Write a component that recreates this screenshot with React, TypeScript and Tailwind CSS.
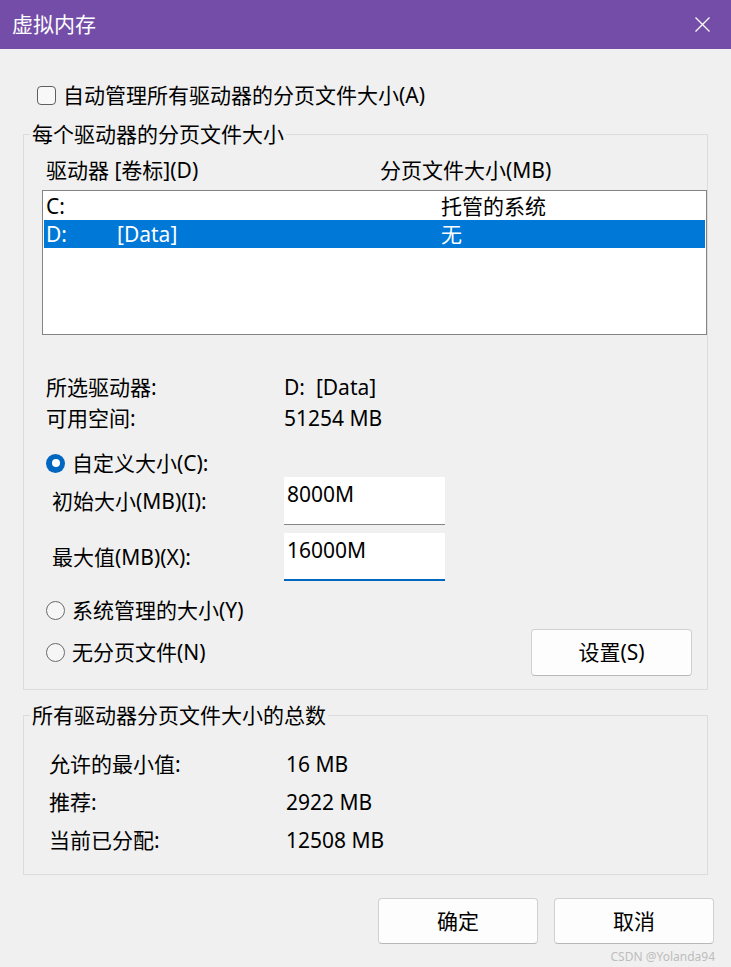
import React from 'react'

// ── 单选按钮 ─────────────────────────────────────────────
function Radio({ checked }: { checked?: boolean }) {
  if (checked) {
    return (
      <span className="flex h-[19px] w-[19px] shrink-0 items-center justify-center rounded-full bg-[#0067c0]">
        <span className="h-[8px] w-[8px] rounded-full bg-white" />
      </span>
    )
  }
  return <span className="h-[19px] w-[19px] shrink-0 rounded-full border border-[#6b6b6b] bg-[#f6f6f6]" />
}

function Button({ children, className = '' }: { children: React.ReactNode; className?: string }) {
  return (
    <button
      className={`flex items-center justify-center rounded-[4px] border border-[#d0d0d0] border-b-[#b8b8b8] bg-[#fdfdfd] ${className}`}
    >
      {children}
    </button>
  )
}

export default function App() {
  return (
    <div className="relative flex h-[967px] w-[731px] flex-col overflow-hidden bg-[#f0f0f0] font-['Noto_Sans','Noto_Sans_CJK_SC',sans-serif] text-[21px] leading-none text-black">
      {/* 标题栏 */}
      <div className="flex h-[49px] shrink-0 items-center justify-between bg-[#744da9] pl-[12px] pr-[21px] text-white">
        <span>虚拟内存</span>
        <svg width="15" height="15" viewBox="0 0 15 15" fill="none" stroke="white" strokeWidth="1.3">
          <path d="M0.5 0.5 L14.5 14.5 M14.5 0.5 L0.5 14.5" />
        </svg>
      </div>

      {/* 自动管理 */}
      <label className="mx-[23px] mt-[34px] flex h-[24px] items-center gap-[7px] pl-[14px]">
        <span className="h-[19px] w-[19px] shrink-0 rounded-[4px] border border-[#5f5f5f] bg-[#f8f8f8]" />
        <span>自动管理所有驱动器的分页文件大小(A)</span>
      </label>

      {/* 每个驱动器的分页文件大小 */}
      <fieldset className="mx-[23px] mt-[15px] border border-[#dcdcdc] pb-[13px]">
        <legend className="ml-[6px] px-[2px] leading-[24px]">每个驱动器的分页文件大小</legend>

        <div className="mt-[12px] grid h-[24px] grid-cols-[334px_1fr] items-center pl-[22px]">
          <span>驱动器 [卷标](D)</span>
          <span>分页文件大小(MB)</span>
        </div>

        <div className="ml-[18px] mt-[8px] h-[145px] border border-[#848484] bg-white p-px">
          <div className="grid h-[28px] grid-cols-[71px_324px_1fr] items-center pl-[2px]">
            <span>C:</span>
            <span />
            <span>托管的系统</span>
          </div>
          <div className="grid h-[28px] grid-cols-[71px_324px_1fr] items-center bg-[#0078d7] pl-[2px] text-white">
            <span>D:</span>
            <span>[Data]</span>
            <span>无</span>
          </div>
        </div>

        <div className="mt-[37px] grid h-[31px] grid-cols-[238px_1fr] items-center pl-[22px]">
          <span>所选驱动器:</span>
          <span>D:&nbsp;&nbsp;[Data]</span>
        </div>
        <div className="grid h-[31px] grid-cols-[238px_1fr] items-center pl-[22px]">
          <span>可用空间:</span>
          <span>51254 MB</span>
        </div>

        <div className="mt-[15px] flex h-[28px] items-center gap-[7px] pl-[22px]">
          <Radio checked />
          <span>自定义大小(C):</span>
        </div>

        <div className="flex items-center pl-[28px]">
          <span className="w-[232px]">初始大小(MB)(I):</span>
          <div className="h-[48px] w-[161px] border-b border-[#868686] bg-white pl-[3px] pt-[7px]">8000M</div>
        </div>
        <div className="mt-[8px] flex items-center pl-[28px]">
          <span className="w-[232px]">最大值(MB)(X):</span>
          <div className="h-[48px] w-[161px] border-b-2 border-[#0067c0] bg-white pl-[3px] pt-[7px]">16000M</div>
        </div>

        <div className="mt-[14px] flex h-[30px] items-center gap-[7px] pl-[22px]">
          <Radio />
          <span>系统管理的大小(Y)</span>
        </div>
        <div className="mt-[4px] flex h-[47px] items-center justify-between pl-[22px] pr-[15px]">
          <div className="flex items-center gap-[7px]">
            <Radio />
            <span>无分页文件(N)</span>
          </div>
          <Button className="h-[47px] w-[161px]">设置(S)</Button>
        </div>
      </fieldset>

      {/* 总数 */}
      <fieldset className="mx-[23px] mt-[13px] border border-[#dcdcdc] pb-[15px]">
        <legend className="ml-[6px] px-[2px] leading-[24px]">所有驱动器分页文件大小的总数</legend>
        <div className="mt-[18px]">
          {[
            ['允许的最小值:', '16 MB'],
            ['推荐:', '2922 MB'],
            ['当前已分配:', '12508 MB'],
          ].map(([k, v]) => (
            <div key={k} className="grid h-[38px] grid-cols-[237px_1fr] items-center pl-[25px]">
              <span>{k}</span>
              <span>{v}</span>
            </div>
          ))}
        </div>
      </fieldset>

      {/* 底部按钮 */}
      <div className="mt-[23px] flex justify-end gap-[16px] pr-[17px]">
        <Button className="h-[46px] w-[160px]">确定</Button>
        <Button className="h-[46px] w-[160px]">取消</Button>
      </div>

      <span className="absolute bottom-[4px] right-[16px] text-[12px] text-[#bdbdbd]">CSDN @Yolanda94</span>
    </div>
  )
}
